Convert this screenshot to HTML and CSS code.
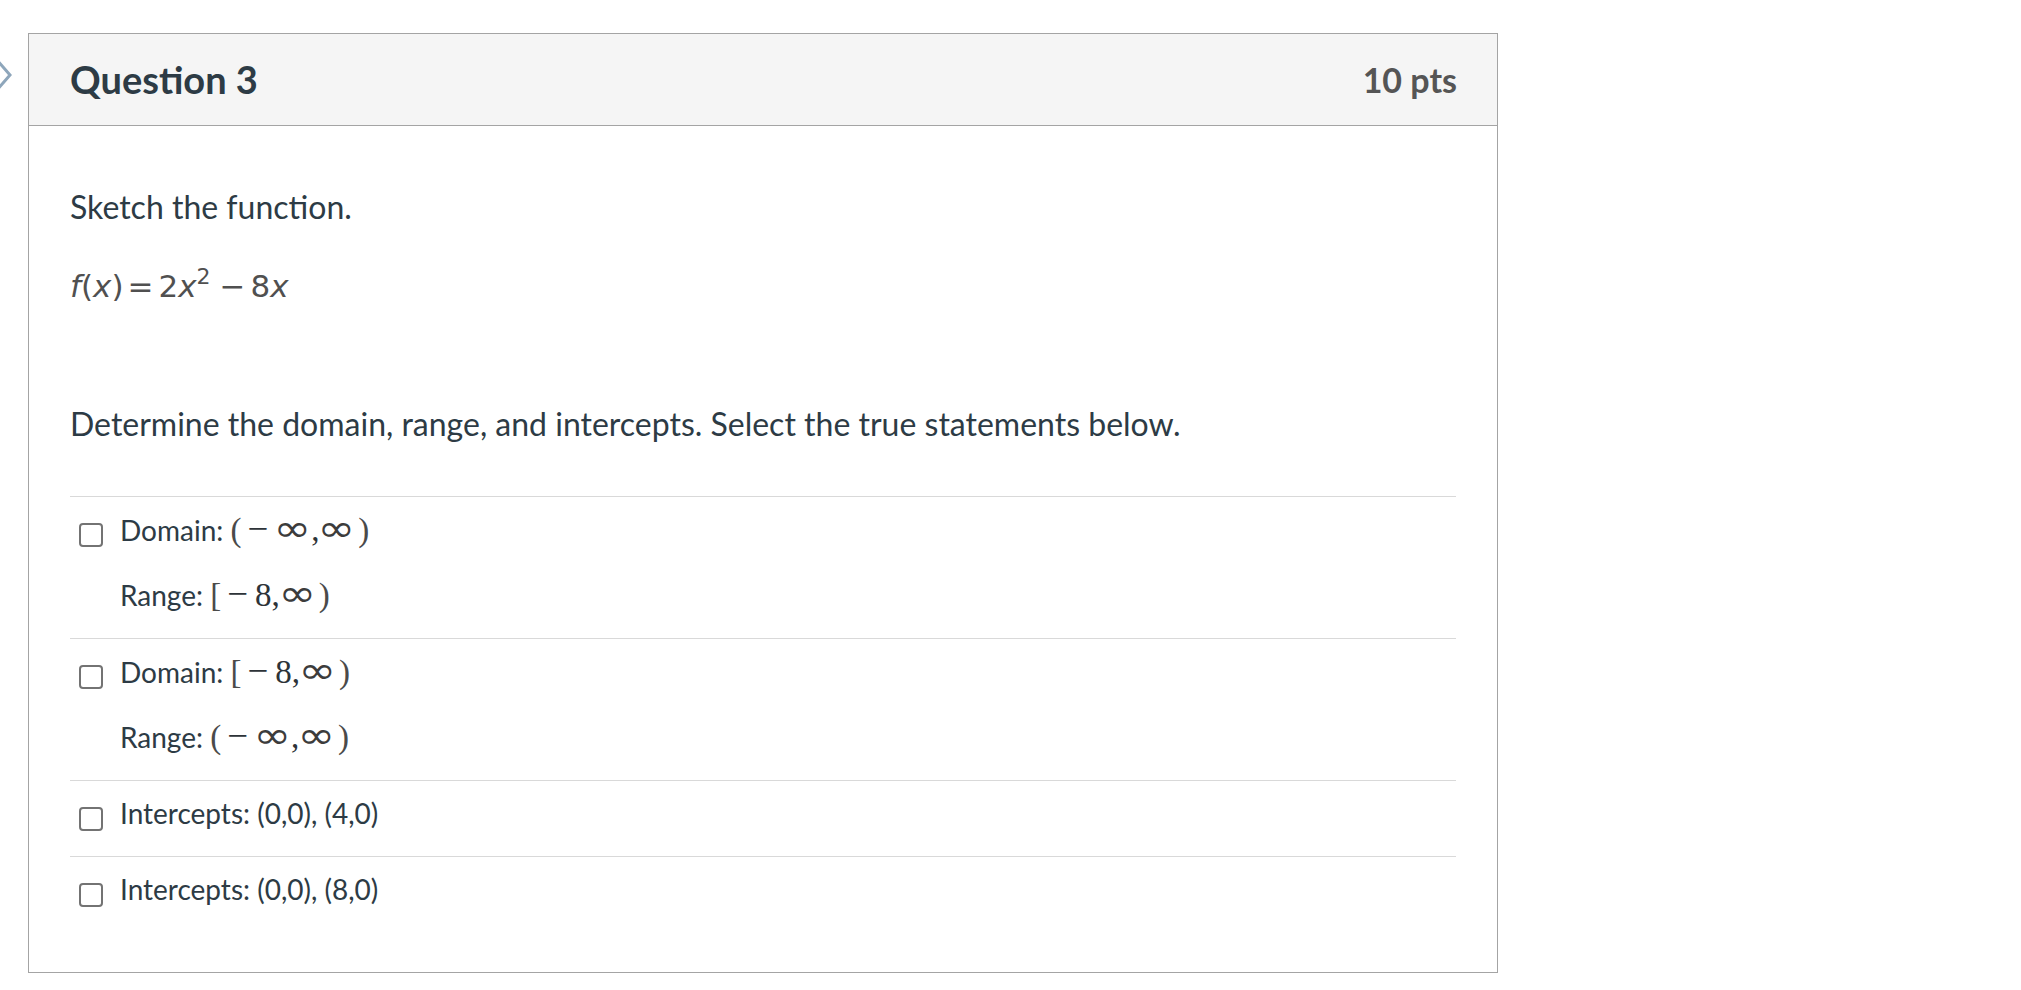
FILE: index.html
```html
<!DOCTYPE html>
<html>
<head>
<meta charset="utf-8">
<link rel="stylesheet" href="styles.css">
</head>
<body>
<svg class="nav-chevron" width="14" height="40" viewBox="0 0 14 40"><polyline points="-4,4 10,20 -4,36" fill="none" stroke="#8ea6bb" stroke-width="3"/></svg>
<div class="page">
  <div class="card">
    <div class="card-header">
      <h2 class="title">Question 3</h2>
      <span class="pts">10 pts</span>
    </div>
    <div class="card-body">
      <p class="sketch">Sketch the function.</p>
      <div class="formula"><i>f</i>(<i>x</i>)<span class="eq">=</span>2<i>x</i><sup>2</sup><span class="minus">−</span>8<i>x</i></div>
      <p class="determine">Determine the domain, range, and intercepts. Select the true statements below.</p>
      <div class="answers">
        <div class="answer">
          <span class="box"></span>
          <div class="label">
            <div class="line">Domain: <span class="m"><span class="p">(</span><span class="op">−</span><span class="inf">∞</span><span class="cm">,</span><span class="inf">∞</span><span class="p close">)</span></span></div>
            <div class="line">Range: <span class="m"><span class="p">[</span><span class="op">−</span>8<span class="cm">,</span><span class="inf">∞</span><span class="p close">)</span></span></div>
          </div>
        </div>
        <div class="answer">
          <span class="box"></span>
          <div class="label">
            <div class="line">Domain: <span class="m"><span class="p">[</span><span class="op">−</span>8<span class="cm">,</span><span class="inf">∞</span><span class="p close">)</span></span></div>
            <div class="line">Range: <span class="m"><span class="p">(</span><span class="op">−</span><span class="inf">∞</span><span class="cm">,</span><span class="inf">∞</span><span class="p close">)</span></span></div>
          </div>
        </div>
        <div class="answer">
          <span class="box"></span>
          <div class="label">
            <div class="line">Intercepts: (0,0), (4,0)</div>
          </div>
        </div>
        <div class="answer">
          <span class="box"></span>
          <div class="label">
            <div class="line">Intercepts: (0,0), (8,0)</div>
          </div>
        </div>
      </div>
    </div>
  </div>
</div>
</body>
</html>
```
FILE: styles.css
```css
html, body {
  margin: 0;
  padding: 0;
  background: #ffffff;
}
body {
  font-family: Lato, "Open Sans", sans-serif;
  color: #2d3b45;
  position: relative;
}
.nav-chevron {
  position: absolute;
  left: 0;
  top: 55px;
}
.page {
  padding: 33px 0 0 28px;
}
.card {
  width: 1470px;
  box-sizing: border-box;
  border: 1px solid #a4a4a4;
}
.card-header {
  height: 91px;
  background: #f5f5f5;
  border-bottom: 1px solid #a4a4a4;
  display: flex;
  align-items: center;
  justify-content: space-between;
  padding: 0 40px 0 41px;
}
.title {
  margin: 0;
  font-size: 38px;
  font-weight: 700;
  line-height: 1.2;
  color: #2d3b45;
}
.pts {
  font-size: 34px;
  font-weight: 700;
  color: #555555;
  line-height: 1.2;
  position: relative;
  top: 1px;
}
.card-body {
  padding: 59px 41px 40px 41px;
  font-size: 32px;
  line-height: 44px;
}
.sketch {
  margin: 0;
}
.formula {
  margin-top: 35px;
  font-family: "DejaVu Sans", sans-serif;
  font-size: 31px;
  line-height: 44px;
  color: #505050;
}
.formula i {
  font-style: italic;
}
.formula sup {
  font-size: 22px;
  line-height: 0;
  vertical-align: 13px;
}
.formula .eq {
  margin: 0 5px 0 4px;
}
.formula .minus {
  margin: 0 5px 0 9px;
}
.determine {
  margin: 94px 0 0 0;
}
.answers {
  margin-top: 50px;
}
.answer {
  border-top: 1px solid #d9d9d9;
  display: flex;
  align-items: flex-start;
  padding: 14px 0 25px 9px;
}
.box {
  flex: none;
  width: 24px;
  height: 24px;
  box-sizing: border-box;
  border: 2px solid #737373;
  border-radius: 4px;
  margin-top: 12px;
  margin-right: 17px;
}
.label {
  display: flex;
  flex-direction: column;
  gap: 28px;
  font-size: 28px;
  line-height: 36px;
}
.m {
  font-family: "Liberation Serif", serif;
  font-size: 33px;
  color: #2d3338;
}
.m .p {
  color: #4a4a4a;
}
.m .close {
  margin-left: 3px;
}
.m .op {
  margin: 0 7px 0 6px;
  font-size: 37px;
}
.m .inf {
  display: inline-block;
  font-family: "DejaVu Sans", sans-serif;
  font-size: 37px;
  color: #3c3c3c;
  transform: scaleX(1.22);
  margin: 0 3px 0 2px;
}
.m .cm {
  margin: 0;
}
```
